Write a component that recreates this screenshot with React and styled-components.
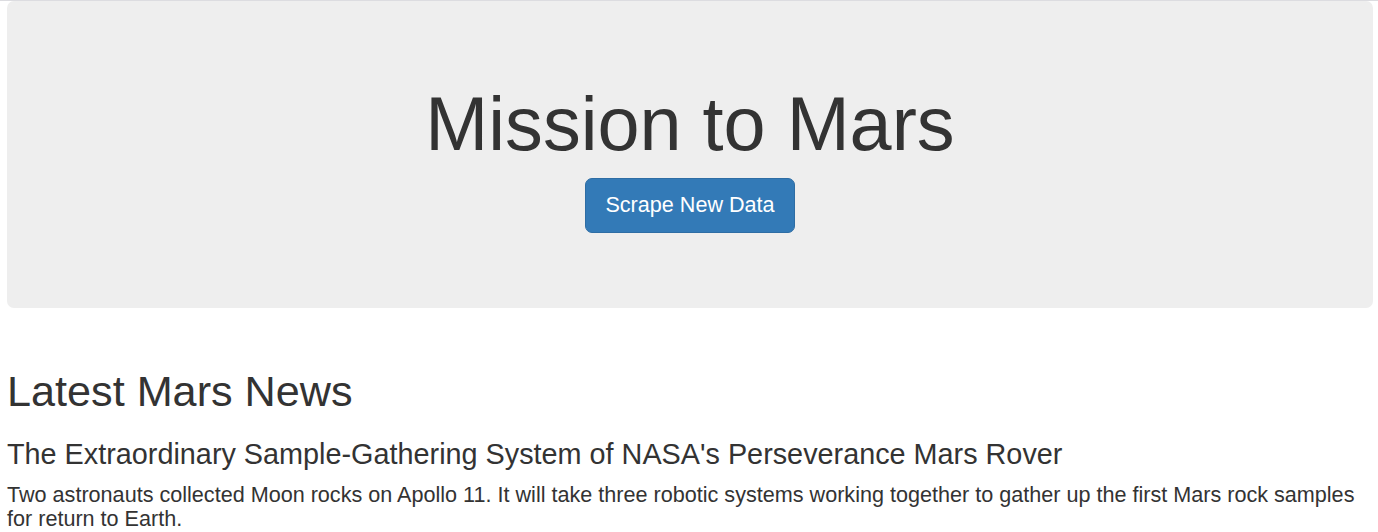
import React from "react";
import styled, { createGlobalStyle } from "styled-components";

const Global = createGlobalStyle`
  html, body { margin: 0; padding: 0; background: #fff; }
  body {
    border-top: 1px solid #dcdce0;
    font-family: "Liberation Sans", Arial, Helvetica, sans-serif;
    color: #333;
    font-size: 19.2px;
    line-height: 24px;
  }
  * { box-sizing: border-box; }
`;

const Page = styled.div`
  padding: 0 5px 0 7px;
`;

const Jumbotron = styled.header`
  background: #eee;
  border-radius: 7px;
  padding: 58px 72px 59px;
  margin-bottom: 36px;
  text-align: center;
  display: flow-root;
`;

const Title = styled.h1`
  margin: 24px 0 12px;
  font-size: 75.6px;
  line-height: 1.1;
  font-weight: 400;
  color: #333;
`;

const PrimaryButton = styled.a`
  display: inline-block;
  padding: 12px 19.7px;
  margin-bottom: 16px;
  font-size: 21.6px;
  line-height: 1.3333;
  color: #fff;
  background: #337ab7;
  border: 1px solid #2e6da4;
  border-radius: 7px;
  text-decoration: none;
  vertical-align: top;
  cursor: pointer;
`;

const Section = styled.section`
  display: flow-root;
`;

const SectionTitle = styled.h1`
  margin: 24px 0 12px;
  font-size: 43.2px;
  line-height: 1.1;
  font-weight: 400;
`;

const ArticleTitle = styled.h3`
  margin: 24px 0 12px;
  font-size: 28.8px;
  line-height: 1.1;
  font-weight: 400;
`;

const Teaser = styled.p`
  margin: 0 0 12px;
  font-size: 21.6px;
  line-height: 24px;
`;

export default function App() {
  return (
    <>
      <Global />
      <Page>
        <Jumbotron>
          <Title>Mission to Mars</Title>
          <PrimaryButton href="#" role="button">Scrape New Data</PrimaryButton>
        </Jumbotron>
        <Section>
          <SectionTitle>Latest Mars News</SectionTitle>
          <ArticleTitle>
            The Extraordinary Sample-Gathering System of NASA's Perseverance Mars Rover
          </ArticleTitle>
          <Teaser>
            Two astronauts collected Moon rocks on Apollo 11. It will take three robotic systems
            working together to gather up the first Mars rock samples for return to Earth.
          </Teaser>
        </Section>
      </Page>
    </>
  );
}
